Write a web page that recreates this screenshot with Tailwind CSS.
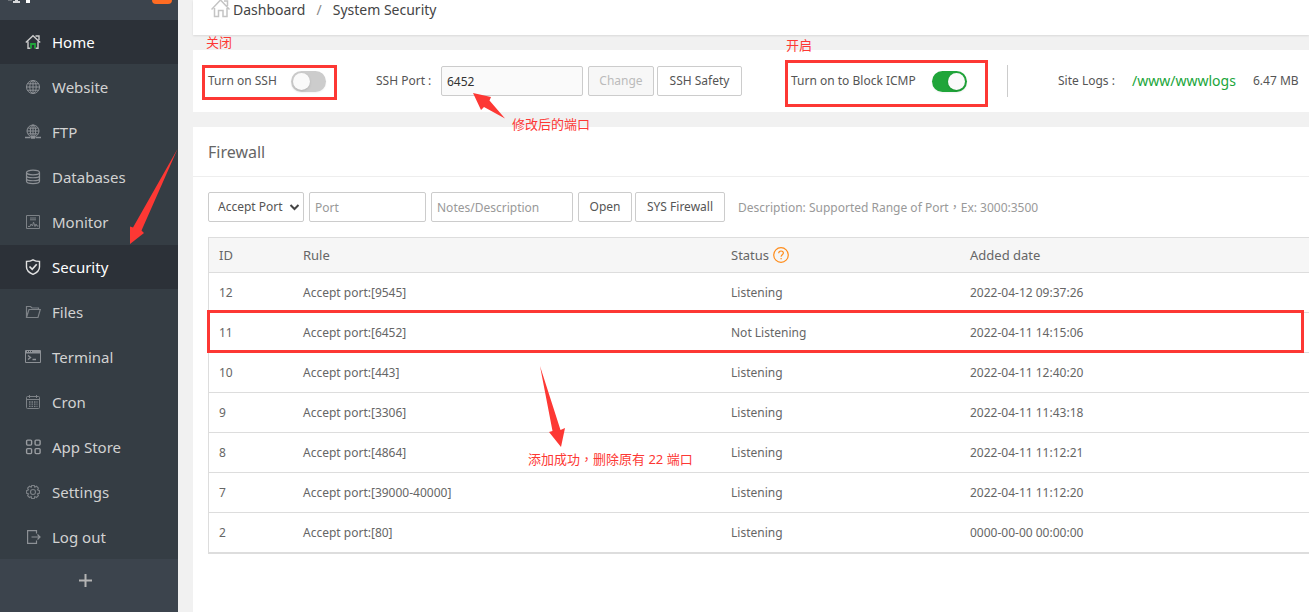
<!DOCTYPE html>
<html lang="en">
<head>
<meta charset="utf-8">
<title>System Security</title>
<script src="https://cdn.jsdelivr.net/npm/@tailwindcss/browser@4"></script>
</head>
<body class="relative flex min-h-screen overflow-hidden bg-[#f1f1f1] font-['Noto_Sans','Noto_Sans_CJK_SC',sans-serif] text-[12px] leading-4 text-[#555]">

<aside class="flex w-[178px] shrink-0 flex-col bg-[#3c444d]">
  <div class="flex h-5 items-start justify-between pr-[6px] pl-2">
    <svg class="h-1 w-6" viewBox="0 0 24 4" fill="#fff" aria-hidden="true"><path d="M0 0h4v1H0z" opacity=".25"/><path d="M7 0h3v1H7zM5 1h7v2H5z" opacity=".8"/><path d="M18 0h4v3h-4z"/></svg>
    <span class="h-1 w-5 rounded-b-full bg-[#ff6c23]"></span>
  </div>
  <nav class="flex flex-col gap-px bg-[#353d44] text-[15px] leading-5 text-[#d2d2d2]">
    <a href="#" class="flex h-11 items-center gap-[11px] bg-[#2c3138] pl-[25px] text-white">
      <svg class="size-4" viewBox="0 0 16 16" fill="none" stroke="#ccc" stroke-width="1.4"><path d="M.8 8.500 8 1.800l7.200 6.700M3 7.500v6.800h2.500M13 7.500v6.800h-2.500M10.500 2h3.500V6"/><path d="M6 14.500V10h4v4.500" stroke="#20a53a" stroke-width="1.800"/></svg>Home</a>
    <a href="#" class="flex h-11 items-center gap-[11px] pl-[25px]">
      <svg class="size-4" viewBox="0 0 16 16" fill="none" stroke="#8d9196"><circle cx="8" cy="8" r="6.500"/><ellipse cx="8" cy="8" rx="3.200" ry="6.500"/><path d="M8 1.500v13M1.500 8h13M2.500 4.800h11M2.500 11.200h11"/></svg>Website</a>
    <a href="#" class="flex h-11 items-center gap-[11px] pl-[25px]">
      <svg class="size-4" viewBox="0 0 16 16" fill="none" stroke="#8d9196"><circle cx="8" cy="7" r="6"/><ellipse cx="8" cy="7" rx="2.700" ry="6"/><path d="M8 1v12M2 7h12M3.200 4.200h9.600M3.200 9.800h9.600"/><path d="M0 13.500h5.500M10.500 13.500H16" stroke-width="1.500"/><path d="M6 13.500h4" stroke-width="2.500"/></svg>FTP</a>
    <a href="#" class="flex h-11 items-center gap-[11px] pl-[25px]">
      <svg class="size-4" viewBox="0 0 16 16" fill="none" stroke="#8d9196" stroke-width="1.200"><ellipse cx="8" cy="3.500" rx="6.500" ry="2.300"/><path d="M1.500 3.500v8.800c0 3 13 3 13 0V3.500M1.500 6.500c0 3 13 3 13 0M1.500 9.500c0 3 13 3 13 0"/></svg>Databases</a>
    <a href="#" class="flex h-11 items-center gap-[11px] pl-[25px]">
      <svg class="size-4" viewBox="0 0 16 16" fill="none" stroke="#7d8287"><path d="M1.500 1.500h13v13h-13zM5 4h6M5 5.800h6M3 12.500h2l1-2.500 1.500 2L8.500 8l1.500 4.500L11 10l1 2h1.500"/></svg>Monitor</a>
    <a href="#" class="flex h-11 items-center gap-[11px] bg-[#2c3138] pl-[25px] text-white">
      <svg class="size-4" viewBox="0 0 16 16" fill="none" stroke="#e2e2e2" stroke-width="1.400"><path d="M8 .8c2 1.200 4.300 1.600 6.500 1.600V8c0 3.500-2.800 5.800-6.500 7.300C4.300 13.800 1.500 11.500 1.500 8V2.400C3.700 2.400 6 2 8 .8z"/><path d="m4.500 7.500 2.700 2.800 4.500-5" stroke-width="1.700"/></svg>Security</a>
    <a href="#" class="flex h-11 items-center gap-[11px] pl-[25px]">
      <svg class="size-4" viewBox="0 0 16 16" fill="none" stroke="#7d8287" stroke-width="1.200"><path d="M1.500 13V2.500h4L7 4h6.500v1.500M1.500 13.500 4 5.500h11.300L13 13.500z"/></svg>Files</a>
    <a href="#" class="flex h-11 items-center gap-[11px] pl-[25px]">
      <svg class="size-4" viewBox="0 0 16 16" fill="none" stroke="#8d9196"><path d="M.5 1.500h15v12H.5z"/><path d="M1 3h14" stroke-width="3"/><path d="m3 6.500 2.500 2L3 10.500M7.500 10.500H11" stroke-width="1.400"/><path d="M2 2.500h1M4 2.500h1M6 2.500h1" stroke="#353d44"/></svg>Terminal</a>
    <a href="#" class="flex h-11 items-center gap-[11px] pl-[25px]">
      <svg class="size-4" viewBox="0 0 16 16" fill="none" stroke="#7d8287"><rect x="1.500" y="2.500" width="13" height="12" rx="1"/><path d="M1.500 5.500h13M4.500 1v3M11.500 1v3"/><path d="M4 8h8.500M4 10.200h8.500M4 12.400h8.500" stroke-dasharray="1.500 1" stroke-width="1.300"/></svg>Cron</a>
    <a href="#" class="flex h-11 items-center gap-[11px] pl-[25px]">
      <svg class="size-4" viewBox="0 0 16 16" fill="none" stroke="#9a9da1" stroke-width="1.400"><rect x="1.600" y="1.100" width="5" height="5" rx="1"/><rect x="10.100" y="1.100" width="5" height="5" rx="1"/><rect x="1.600" y="9.600" width="5" height="5" rx="1"/><rect x="10.100" y="9.600" width="5" height="5" rx="1"/></svg>App Store</a>
    <a href="#" class="flex h-11 items-center gap-[11px] pl-[25px]">
      <svg class="size-4" viewBox="0 0 16 16" fill="none" stroke="#7d8287" stroke-width="1.100"><circle cx="8" cy="8" r="2.500"/><path d="M6.700 1.500h2.600l.5 1.700 1.700-.9 1.900 1.900-.9 1.600 1.900.9v2.600l-1.900.5.900 1.900-1.900 1.800-1.700-.9-.5 1.900H6.700l-.5-1.900-1.700.9-1.900-1.800.9-1.900-1.900-.5V6.700l1.900-.9-.9-1.600 1.900-1.900 1.700.9z"/></svg>Settings</a>
    <a href="#" class="flex h-11 items-center gap-[11px] pl-[25px]">
      <svg class="size-4" viewBox="0 0 16 16" fill="none" stroke="#8d9196" stroke-width="1.200"><path d="M11.500 4.500V1.600H2.600v12.800h8.900v-2.900M6.500 8H15M12.500 5.500 15 8l-2.500 2.500"/></svg>Log out</a>
  </nav>
  <button type="button" aria-label="Add menu item" class="flex h-[42px] items-center justify-center pr-[7px]">
    <svg class="size-[13px]" viewBox="0 0 13 13" stroke="#b4b4b4" stroke-width="2"><path d="M6.500 0v13M0 6.500h13"/></svg>
  </button>
</aside>

<div class="flex min-w-0 flex-1 flex-col gap-[15px] pl-[15px]">
  <header class="flex h-[35px] shrink-0 items-start bg-white pl-[18px] text-[14px] leading-5 text-[#444] shadow-[0_1px_2px_rgba(0,0,0,0.1)]">
    <a href="#" class="flex items-center gap-[2px]">
      <svg class="h-5 w-5" viewBox="0 0 20 20" fill="none" stroke="#c4c4c4" stroke-width="1.500"><path d="M.5 9.500 9.500 0l9 9.500M3.500 8v8.500h4v-6h4.500v6h4V8M13 1h3.500V6"/></svg>Dashboard</a>
    <span class="px-[11px] text-[#888]">/</span>
    <span>System Security</span>
  </header>

  <section class="flex h-[62px] shrink-0 items-center bg-white pl-[15px] whitespace-nowrap">
    <div class="flex w-[168px] shrink-0 items-center">
      <label for="ssh" class="w-[83px]">Turn on SSH</label>
      <input id="ssh" type="checkbox" role="switch" class="h-[21px] w-[35px] appearance-none rounded-full bg-[#ccc] shadow-xs before:m-[2px] before:block before:size-[17px] before:rounded-full before:bg-[#fafafa] before:shadow checked:bg-[#20a53a] checked:before:ml-4">
    </div>
    <div class="flex w-[415px] shrink-0 items-center">
      <label for="sshport" class="w-[65px]">SSH Port :</label>
      <input id="sshport" value="6452" class="h-[30px] w-[142px] rounded-xs border border-[#ccc] bg-[#fafafa] px-[5px] text-[#333]">
      <button type="button" disabled class="ml-[5px] h-[30px] w-[66px] rounded-xs border border-[#ccc] bg-[#f7f7f7] text-[#bbb]">Change</button>
      <button type="button" class="ml-[3px] h-[30px] w-[85px] rounded-xs border border-[#ccc] bg-white">SSH Safety</button>
    </div>
    <div class="flex h-8 w-[217px] shrink-0 items-center border-r border-[#ccc]">
      <label for="icmp" class="w-[141px]">Turn on to Block ICMP</label>
      <input id="icmp" type="checkbox" role="switch" checked class="h-[21px] w-[35px] appearance-none rounded-full bg-[#ccc] shadow-xs before:m-[2px] before:block before:size-[17px] before:rounded-full before:bg-[#fafafa] before:shadow checked:bg-[#20a53a] checked:before:ml-4">
    </div>
    <div class="flex items-center pl-[50px]">
      <span class="w-[74px]">Site Logs :</span>
      <a href="#" class="w-[121px] text-[14px] text-[#20a53a]">/www/wwwlogs</a>
      <span>6.47 MB</span>
    </div>
  </section>

  <main class="flex-1 bg-white">
    <h1 class="flex h-[50px] items-center border-b border-[#eee] pl-[15px] text-[16px] leading-6 text-[#666]">Firewall</h1>
    <div class="pt-[15px] pl-[15px]">
      <form class="flex items-center whitespace-nowrap">
        <div class="relative">
          <select aria-label="Rule type" class="block h-[30px] w-24 appearance-none rounded-xs border border-[#ccc] bg-white pl-[9px]"><option>Accept Port</option></select>
          <svg class="pointer-events-none absolute top-3 right-1 h-[7px] w-[11px]" viewBox="0 0 11 7" fill="none" stroke="#444" stroke-width="2"><path d="m1.500 1 4 4 4-4"/></svg>
        </div>
        <input aria-label="Port" placeholder="Port" class="ml-[5px] h-[30px] w-[117px] rounded-xs border border-[#ccc] px-[5px] placeholder:text-[#999]">
        <input aria-label="Notes" placeholder="Notes/Description" class="ml-[5px] h-[30px] w-[142px] rounded-xs border border-[#ccc] px-[5px] placeholder:text-[#999]">
        <button type="button" class="ml-[5px] h-[30px] w-[54px] rounded-xs border border-[#ccc]">Open</button>
        <button type="button" class="ml-[3px] h-[30px] w-[90px] rounded-xs border border-[#ccc]">SYS Firewall</button>
        <span class="pl-[13px] text-[#999]">Description: Supported Range of Port<span class="font-['Noto_Sans_CJK_TC',sans-serif]" lang="zh-TW">，</span>Ex: 3000:3500</span>
      </form>
      <table class="mt-[15px] w-full table-fixed border-separate border-spacing-0 border-t border-b border-l border-[#ddd] text-left text-[#666]">
        <colgroup><col class="w-[84px]"><col class="w-[428px]"><col class="w-[239px]"><col></colgroup>
        <thead class="bg-[#f6f6f6] text-[13px]">
          <tr class="h-[35px] *:border-b *:border-[#ddd] *:px-[10px] *:py-0 *:font-normal">
            <th>ID</th><th>Rule</th>
            <th><span class="flex items-center gap-1">Status<a href="#" aria-label="Status help"><svg class="size-4" viewBox="0 0 16 16" fill="none" stroke="#ff8c1a" stroke-width="1.200"><circle cx="8" cy="8" r="7.300"/><path d="M5.700 6.300c0-3 4.700-3 4.700-.2 0 1.700-2.300 1.700-2.300 3.600M8.100 11v1.300"/></svg></a></span></th>
            <th>Added date</th>
          </tr>
        </thead>
        <tbody class="*:h-10 [&_td]:border-b [&_td]:border-[#ddd] [&_td]:px-[10px] [&_td]:py-0">
          <tr><td>12</td><td>Accept port:[9545]</td><td>Listening</td><td>2022-04-12 09:37:26</td></tr>
          <tr><td>11</td><td>Accept port:[6452]</td><td>Not Listening</td><td>2022-04-11 14:15:06</td></tr>
          <tr><td>10</td><td>Accept port:[443]</td><td>Listening</td><td>2022-04-11 12:40:20</td></tr>
          <tr><td>9</td><td>Accept port:[3306]</td><td>Listening</td><td>2022-04-11 11:43:18</td></tr>
          <tr><td>8</td><td>Accept port:[4864]</td><td>Listening</td><td>2022-04-11 11:12:21</td></tr>
          <tr><td>7</td><td>Accept port:[39000-40000]</td><td>Listening</td><td>2022-04-11 11:12:20</td></tr>
          <tr><td>2</td><td>Accept port:[80]</td><td>Listening</td><td>0000-00-00 00:00:00</td></tr>
        </tbody>
      </table>
    </div>
  </main>
</div>

<!-- Annotations laid over the page -->
<div class="pointer-events-none absolute inset-0 text-[13px] leading-4 whitespace-nowrap text-[#fd3834]">
  <div class="absolute top-[65px] left-[202px] h-[35px] w-[135px] border-3"></div>
  <div class="absolute top-[60px] left-[785px] h-[47px] w-[203px] border-3"></div>
  <div class="absolute top-[310px] right-[5px] left-[207px] h-[43px] border-3"></div>
  <svg class="absolute top-0 left-0 h-[460px] w-[600px]" viewBox="0 0 600 460" fill="currentColor"><path d="M130 226.500 133 227.500 177.500 149 141.500 230.500 144 233 130 244zM473 93 491 97 489.500 100.500 505 118.500 484 107 481 110zM540 366 552.500 431 549 432 561 447 565 428 560.500 430z"/></svg>
  <span class="absolute top-[34px] left-[206px]">关闭</span>
  <span class="absolute top-[37px] left-[786px]">开启</span>
  <span class="absolute top-[116px] left-[512px]">修改后的端口</span>
  <span class="absolute top-[451px] left-[528px]">添加成功<span class="font-['Noto_Sans_CJK_TC',sans-serif]" lang="zh-TW">，</span>删除原有 22 端口</span>
</div>
</body>
</html>
